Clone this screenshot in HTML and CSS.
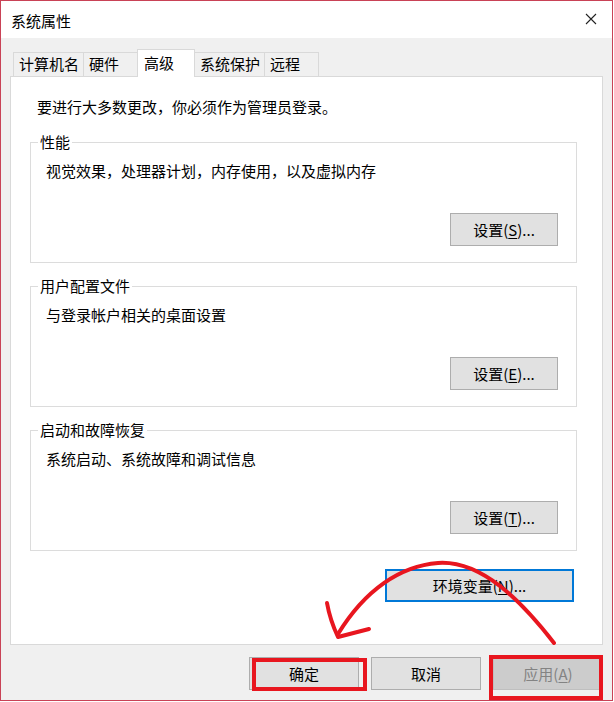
FILE: index.html
```html
<!DOCTYPE html>
<html lang="zh-CN">
<head>
<meta charset="utf-8">
<title>系统属性</title>
<link rel="stylesheet" href="styles.css">
</head>
<body>
<div class="window">
  <div class="titlebar">
    <span class="title">系统属性</span>
    <svg class="close" width="12" height="12" viewBox="0 0 12 12"><path d="M1 1 L11 11 M11 1 L1 11" stroke="#222" stroke-width="1.1" fill="none"/></svg>
  </div>
  <div class="content">
    <div class="tabs">
      <div class="tab">计算机名</div>
      <div class="tab">硬件</div>
      <div class="tab active">高级</div>
      <div class="tab">系统保护</div>
      <div class="tab">远程</div>
    </div>
    <div class="panel">
      <p class="note">要进行大多数更改，你必须作为管理员登录。</p>
      <fieldset class="group">
        <legend>性能</legend>
        <p class="desc">视觉效果，处理器计划，内存使用，以及虚拟内存</p>
        <button class="btn set">设置(<u>S</u>)...</button>
      </fieldset>
      <fieldset class="group">
        <legend>用户配置文件</legend>
        <p class="desc">与登录帐户相关的桌面设置</p>
        <button class="btn set">设置(<u>E</u>)...</button>
      </fieldset>
      <fieldset class="group">
        <legend>启动和故障恢复</legend>
        <p class="desc">系统启动、系统故障和调试信息</p>
        <button class="btn set">设置(<u>T</u>)...</button>
      </fieldset>
      <div class="env-row">
        <button class="btn env">环境变量(<u>N</u>)...</button>
      </div>
    </div>
    <div class="actions">
      <button class="btn action">确定</button>
      <button class="btn action">取消</button>
      <button class="btn action disabled">应用(<u>A</u>)</button>
    </div>
  </div>
  <svg class="annot" width="613" height="701" viewBox="0 0 613 701">
    <g fill="none" stroke="#e8161f" stroke-linecap="round" stroke-linejoin="round">
      <path d="M554 643 C 522 602 482 560 438 563 C 400 566 365 590 338 634" stroke-width="4"/>
      <path d="M327 603 Q 330 620 338 637 L 369 629" stroke-width="4"/>
      <rect x="254" y="660" width="111" height="29" stroke-width="4" stroke-linecap="butt" stroke-linejoin="miter"/>
      <rect x="491" y="657" width="110" height="41" stroke-width="4" stroke-linecap="butt" stroke-linejoin="miter"/>
    </g>
  </svg>
</div>
</body>
</html>
```
FILE: styles.css
```css
html, body {
  margin: 0;
  padding: 0;
  background: #ffffff;
}
body {
  font-family: "Noto Sans CJK SC", "Noto Sans", sans-serif;
  font-size: 15px;
  line-height: 20px;
  color: #000;
}
.window {
  position: relative;
  box-sizing: border-box;
  width: 613px;
  height: 701px;
  border: 1px solid #c94256;
  background: #f0f0f0;
  display: flex;
  flex-direction: column;
}
.titlebar {
  height: 37px;
  background: #ffffff;
  display: flex;
  align-items: center;
  justify-content: space-between;
  padding: 3px 15px 0 10px;
  box-sizing: border-box;
}
.title {
  font-size: 15px;
}
.close {
  display: block;
  margin-top: -4px;
}
.content {
  padding: 11px 9px 0 9px;
}
.tabs {
  display: flex;
  align-items: flex-end;
  height: 27px;
  padding-left: 3px;
}
.tab {
  box-sizing: border-box;
  height: 24px;
  min-width: 55px;
  padding: 0 4px 0 5px;
  border: 1px solid #d9d9d9;
  border-bottom: none;
  background: #f0f0f0;
  line-height: 22px;
  white-space: nowrap;
}
.tab + .tab {
  margin-left: -1px;
}
.tab.active {
  position: relative;
  z-index: 1;
  height: 28px;
  min-width: 58px;
  margin-bottom: -1px;
  padding: 0 6px;
  background: #ffffff;
  line-height: 25px;
}
.panel {
  box-sizing: border-box;
  border: 1px solid #d9d9d9;
  background: #ffffff;
  padding: 20px 25px 42px 19px;
}
.note {
  margin: 0 0 15px 0;
  padding-left: 7px;
}
.group {
  margin: 0 0 13px 0;
  padding: 0 18px 16px 15px;
  border: 1px solid #dcdcdc;
  display: flex;
  flex-direction: column;
  min-width: 0;
}
.group legend {
  margin-left: -8px;
  padding: 0 2px;
  line-height: 20px;
}
.desc {
  margin: 9px 0 0 0;
}
.btn {
  box-sizing: border-box;
  font-family: inherit;
  font-size: 15px;
  line-height: 20px;
  color: #000;
  height: 33px;
  padding: 0;
  border: 1px solid #adadad;
  background: #e1e1e1;
  text-align: center;
}
.btn u {
  text-underline-offset: 2px;
}
.set {
  width: 108px;
  margin-top: 32px;
  align-self: flex-end;
}
.env-row {
  display: flex;
  justify-content: flex-end;
  padding-right: 3px;
  margin-top: 18px;
}
.env {
  width: 189px;
  border: 2px solid #0078d7;
}
.actions {
  display: flex;
  justify-content: flex-end;
  gap: 12px;
  margin-top: 12px;
}
.action {
  width: 110px;
}
.action.disabled {
  background: #cccccc;
  border-color: #bfbfbf;
  color: #838383;
}
.annot {
  position: absolute;
  top: -1px;
  left: -1px;
  pointer-events: none;
}
```
